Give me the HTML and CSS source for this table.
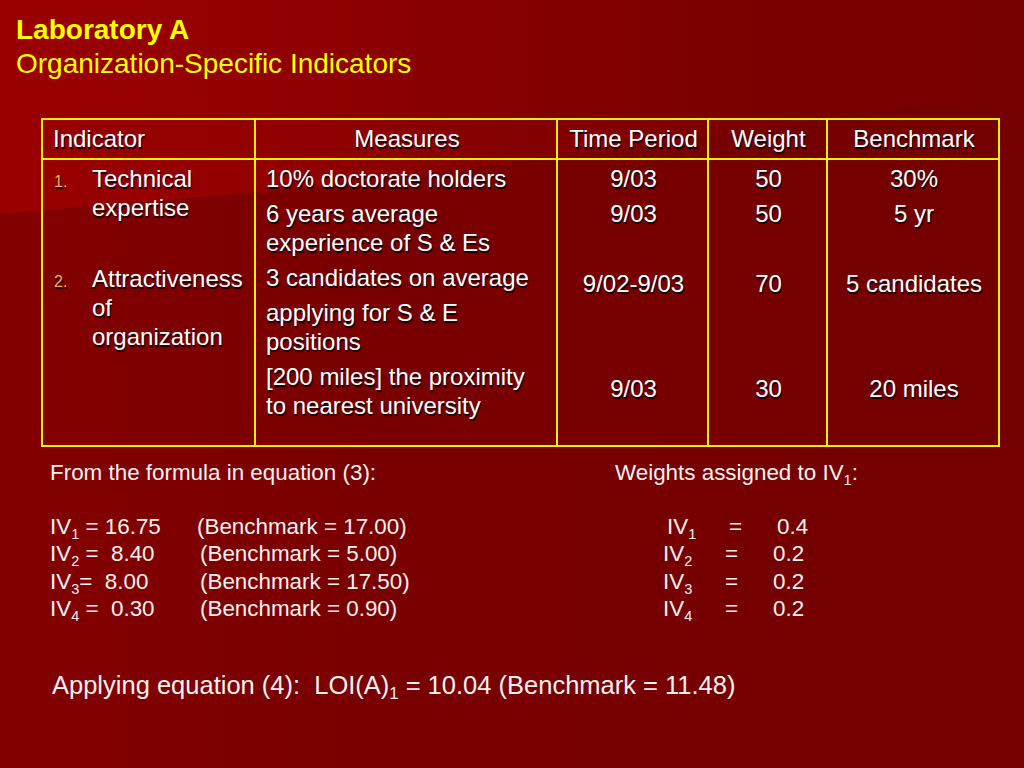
FILE: index.html
```html
<!DOCTYPE html>
<html lang="en">
<head>
<meta charset="utf-8">
<title>Laboratory A – Organization-Specific Indicators</title>
<link rel="stylesheet" href="styles.css">
</head>
<body>
<div class="slide">
  <header class="title">
    <h1 class="title-main">Laboratory A</h1>
    <p class="title-sub">Organization-Specific Indicators</p>
  </header>

  <table class="ind-table">
    <colgroup>
      <col class="col-ind">
      <col class="col-meas">
      <col class="col-time">
      <col class="col-weight">
      <col class="col-bench">
    </colgroup>
    <thead>
      <tr>
        <th class="left">Indicator</th>
        <th>Measures</th>
        <th>Time Period</th>
        <th>Weight</th>
        <th>Benchmark</th>
      </tr>
    </thead>
    <tbody>
      <tr>
        <td class="left">
          <div class="item"><span class="num">1.</span><span class="item-text">Technical<br>expertise</span></div>
          <div class="item gap1"><span class="num">2.</span><span class="item-text">Attractiveness<br>of<br>organization</span></div>
        </td>
        <td class="left">
          <p>10% doctorate holders</p>
          <p>6 years average<br>experience of S &amp; Es</p>
          <p>3 candidates on average</p>
          <p>applying for S &amp; E<br>positions</p>
          <p>[200 miles] the proximity<br>to nearest university</p>
        </td>
        <td>
          <p>9/03</p>
          <p>9/03</p>
          <p class="gap1">9/02-9/03</p>
          <p class="gap2">9/03</p>
        </td>
        <td>
          <p>50</p>
          <p>50</p>
          <p class="gap1">70</p>
          <p class="gap2">30</p>
        </td>
        <td>
          <p>30%</p>
          <p>5 yr</p>
          <p class="gap1">5 candidates</p>
          <p class="gap2">20 miles</p>
        </td>
      </tr>
    </tbody>
  </table>

  <section class="results">
    <div class="results-left">
      <p class="lead">From the formula in equation (3):</p>
      <div class="iv-list">
        <span class="iv-val">IV<sub>1</sub> = 16.75</span><span class="iv-bench first">(Benchmark = 17.00)</span>
        <span class="iv-val">IV<sub>2</sub> =&nbsp; 8.40</span><span class="iv-bench">(Benchmark = 5.00)</span>
        <span class="iv-val">IV<sub>3</sub>=&nbsp; 8.00</span><span class="iv-bench">(Benchmark = 17.50)</span>
        <span class="iv-val">IV<sub>4</sub> =&nbsp; 0.30</span><span class="iv-bench">(Benchmark = 0.90)</span>
      </div>
    </div>
    <div class="results-right">
      <p class="lead">Weights assigned to IV<sub>1</sub>:</p>
      <div class="weights">
        <div class="w-row shift"><span>IV<sub>1</sub></span><span>=</span><span>0.4</span></div>
        <div class="w-row"><span>IV<sub>2</sub></span><span>=</span><span>0.2</span></div>
        <div class="w-row"><span>IV<sub>3</sub></span><span>=</span><span>0.2</span></div>
        <div class="w-row"><span>IV<sub>4</sub></span><span>=</span><span>0.2</span></div>
      </div>
    </div>
  </section>

  <p class="summary">Applying equation (4):&nbsp; LOI(A)<sub>1</sub> = 10.04 (Benchmark = 11.48)</p>
</div>
</body>
</html>
```

FILE: styles.css
```css
* { box-sizing: border-box; }

html, body {
  margin: 0;
  padding: 0;
}

body {
  width: 1024px;
  height: 768px;
  overflow: hidden;
  font-family: "Liberation Sans", Arial, sans-serif;
  color: #ffffff;
}

.slide {
  position: relative;
  width: 1024px;
  height: 768px;
  background: linear-gradient(to right, #830000 0%, #7a0000 35%, #760000 70%, #750000 100%);
  overflow: hidden;
}

/* decorative lighter swoosh in the top-left corner */
.slide::before {
  content: "";
  position: absolute;
  inset: 0;
  clip-path: polygon(0 0, 100% 0, 100% 90px, 60% 150px, 30% 188px, 0 214px);
  background: linear-gradient(to right, #9a0000 0%, #930000 25%, #850000 50%, #7a0000 75%, #770000 100%);
  z-index: 0;
}

.slide > * {
  position: relative;
  z-index: 1;
}

/* ---------- title ---------- */
.title {
  padding: 13px 0 0 16px;
  color: #ffff00;
}

.title-main,
.title-sub {
  margin: 0;
  font-size: 28px;
  line-height: 34px;
}

.title-main { font-weight: bold; }
.title-sub { font-weight: normal; }

/* ---------- table ---------- */
.ind-table {
  margin: 37px 0 0 41px;
  width: 959px;
  table-layout: fixed;
  border-collapse: collapse;
  border: 2px solid #fff200;
  font-size: 24px;
  line-height: 29px;
  text-shadow: 1px 2px 1px rgba(0, 0, 0, 0.85);
}

.col-ind { width: 213px; }
.col-meas { width: 302px; }
.col-time { width: 151px; }
.col-weight { width: 119px; }
.col-bench { width: 172px; }

.ind-table th,
.ind-table td {
  border: 2px solid #fff200;
  padding: 0 8px 0 10px;
  text-align: center;
  vertical-align: top;
  font-weight: normal;
}

.ind-table th {
  height: 40px;
  padding-top: 4px;
  padding-bottom: 5px;
}

.ind-table td {
  padding-top: 4px;
  padding-bottom: 25px;
}

.ind-table .left { text-align: left; }

.ind-table p {
  margin: 6px 0 0;
}

.ind-table p:first-child { margin-top: 0; }

.ind-table p.gap1 { margin-top: 41px; }
.ind-table p.gap2 { margin-top: 76px; }

.item {
  display: flex;
  align-items: baseline;
}

.item.gap1 { margin-top: 42px; }

.num {
  flex: 0 0 39px;
  font-size: 16px;
  color: #f2ad4a;
  padding-left: 1px;
}

.item-text { flex: 1 1 auto; }

sub {
  font-size: 65%;
  line-height: 0;
  vertical-align: -0.32em;
}

/* ---------- results ---------- */
.results {
  display: flex;
  margin-top: 12px;
  font-size: 22.4px;
  line-height: 27.5px;
  color: #f8f0f0;
}

.results p { margin: 0; }

.results-left {
  flex: 0 0 615px;
  padding-left: 50px;
}

.results-right {
  flex: 1 1 auto;
}

.lead { margin-bottom: 26px !important; }

.iv-list {
  display: grid;
  grid-template-columns: 150px auto;
  justify-content: start;
}

.iv-bench.first { margin-left: -3px; }

.weights {
  padding-left: 48px;
}

.w-row {
  display: grid;
  grid-template-columns: 62px 48px auto;
}

.w-row.shift { padding-left: 4px; }

/* ---------- summary ---------- */
.summary {
  margin: 47px 0 0 52px;
  font-size: 25.5px;
  line-height: 31px;
  color: #f8f0f0;
}
```
